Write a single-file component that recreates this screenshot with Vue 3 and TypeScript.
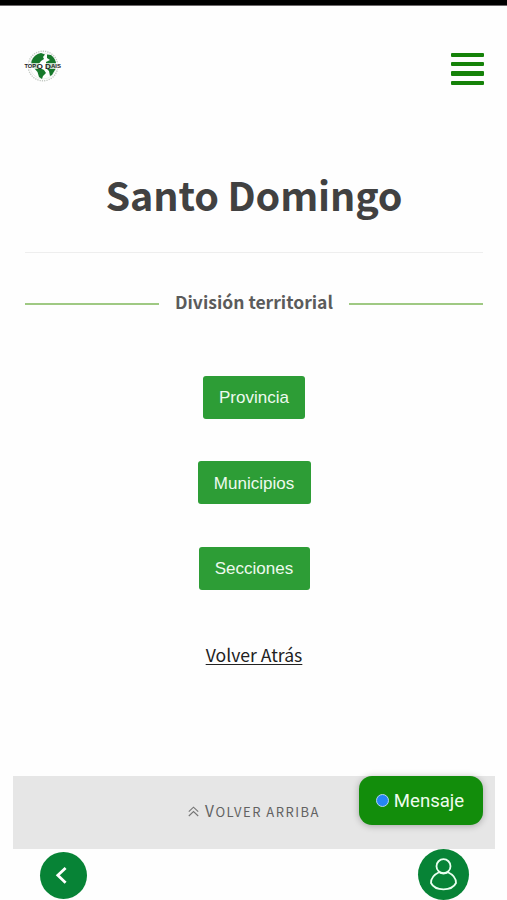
<script setup lang="ts">
import { ref } from 'vue'

interface Division {
  label: string
  width: number
}

const title = ref<string>('Santo Domingo')
const divisions: Division[] = [
  { label: 'Provincia', width: 102 },
  { label: 'Municipios', width: 113 },
  { label: 'Secciones', width: 111 },
]
</script>

<template>
  <div class="page">
    <div class="statusbar"></div>
    <header class="header">
      <svg class="logo" width="38" height="34" viewBox="0 0 38 34" aria-label="Topo Dais">
        <circle cx="19" cy="16" r="14.8" fill="#fff" stroke="#c4cac4" stroke-width="1.4" stroke-dasharray="1.3 1" />
        <circle cx="19" cy="16" r="13" fill="#fdfefd" stroke="#d5ddd5" stroke-width=".5" />
        <path d="M7.5 11Q10 4.5 17 3L21 4.5L19 7L20 9L17 11L14 15L16 18L20 20L22 23L19 26L18 29L15 27L13.5 22L10 18L7 16Z" fill="#16782a" />
        <path d="M23 4.5L27 5Q32 9 32 14L31.5 19L28 25L26 26L25 21L22 18L22 12L26 10L23 8Z" fill="#16782a" />
        <rect x="1" y="13" width="36" height="6" fill="#fff" opacity=".75" />
        <text x="0.5" y="18" class="logo-small" textLength="11.5" lengthAdjust="spacingAndGlyphs">TOP</text>
        <text x="12.4" y="18.8" class="logo-big" textLength="14.6" lengthAdjust="spacingAndGlyphs">O D</text>
        <text x="27" y="18" class="logo-small" textLength="10" lengthAdjust="spacingAndGlyphs">AIS</text>
      </svg>
      <button class="menu" aria-label="Menú">
        <span></span><span></span><span></span><span></span>
      </button>
    </header>

    <main class="content">
      <h1 class="title">{{ title }}</h1>
      <div class="divider"><h2>División territorial</h2></div>
      <nav class="divisions">
        <button v-for="d in divisions" :key="d.label" class="division" :style="{ width: d.width + 'px' }">
          {{ d.label }}
        </button>
      </nav>
      <a class="back" href="#">Volver Atrás</a>
    </main>

    <footer class="footer">
      <a class="top" href="#">
        <svg width="11" height="11" viewBox="0 0 11 11" fill="none" stroke="#757575" stroke-width="1.1">
          <path d="M.8 5.7L5.5 1.2L10.2 5.7M.8 10L5.5 5.5L10.2 10" />
        </svg>
        <span class="top-label">Volver arriba</span>
      </a>
      <button class="message"><i></i><span>Mensaje</span></button>
    </footer>

    <div class="bottom">
      <button class="round prev" aria-label="Anterior">
        <svg width="47" height="47" viewBox="0 0 47 47" fill="none" stroke="#fff" stroke-width="2.8">
          <path d="M25.6 15.9L17.8 23.3L25.6 30.7" />
        </svg>
      </button>
      <button class="round user" aria-label="Perfil">
        <svg width="51" height="51" viewBox="0 0 51 51" fill="none" stroke="#e9fff0" stroke-width="1.8">
          <circle cx="25.5" cy="17.2" r="7" />
          <path d="M21 23.2C16 25.5 13 30 13 34C15 38 20 40.3 25.5 40.3S36 38 38 34C38 30 35 25.5 30 23.2Q25.5 25.8 21 23.2" stroke-linejoin="round" />
        </svg>
      </button>
    </div>
  </div>
</template>

<style>
body {
  background: #fefefe;
}
</style>

<style scoped>
.page {
  box-sizing: border-box;
  width: 507px;
  height: 900px;
  overflow: hidden;
  display: flex;
  flex-direction: column;
  background: #fefefe;
  font-family: "Noto Sans CJK SC", "Open Sans", sans-serif;
}
button {
  border: 0;
  padding: 0;
  margin: 0;
}
.statusbar {
  flex: none;
  height: 5px;
  background: #000;
  border-bottom: 1px solid #6d696b;
}
.header {
  flex: none;
  display: flex;
  justify-content: space-between;
  align-items: flex-start;
  height: 114px;
  padding: 44px 23px 0 24px;
  box-sizing: border-box;
}
.logo text {
  font-family: "Liberation Sans", sans-serif;
  font-weight: 700;
  fill: #222;
}
.logo .logo-small {
  font-size: 4.8px;
}
.logo .logo-big {
  font-size: 7.6px;
}
.menu {
  display: flex;
  flex-direction: column;
  gap: 5px;
  width: 33px;
  margin-top: 3px;
  background: none;
}
.menu span {
  height: 4.2px;
  border-radius: 1px;
  background: #158209;
}
.content {
  flex: none;
  height: 656.4px;
  display: flex;
  flex-direction: column;
  align-items: center;
  padding: 0 24px 0 25px;
  box-sizing: border-box;
}
.title {
  align-self: stretch;
  margin: 0;
  height: 133px;
  padding-top: 44px;
  box-sizing: border-box;
  border-bottom: 1px solid #eee;
  text-align: center;
  font-size: 39.5px;
  font-weight: 700;
  letter-spacing: -0.15px;
  line-height: 60px;
  color: #414141;
}
.divider {
  align-self: stretch;
  display: flex;
  align-items: center;
  gap: 16px;
  height: 30px;
  margin-top: 35px;
}
.divider::before,
.divider::after {
  content: "";
  flex: 1;
  height: 2px;
  margin-top: 1px;
  background: #9fc983;
}
.divider h2 {
  margin: -2px 0 0;
  font-size: 17.5px;
  line-height: 28px;
  font-weight: 700;
  color: #5b5b5b;
}
.divisions {
  display: flex;
  flex-direction: column;
  align-items: center;
  gap: 42.7px;
  margin-top: 57.8px;
}
.division {
  height: 42.8px;
  padding-top: 2px;
  border-radius: 3px;
  background: #2d9d36;
  color: #eefaef;
  font-family: "Liberation Sans", Arial, sans-serif;
  font-size: 17px;
}
.back {
  margin-top: 50.6px;
  font-size: 17.6px;
  line-height: 30px;
  color: #222;
  text-decoration: underline;
  text-decoration-thickness: 1px;
  text-underline-offset: 2px;
}
.footer {
  flex: none;
  position: relative;
  display: flex;
  justify-content: center;
  height: 73px;
  margin: 0 12px 0 13px;
  background: #e6e6e6;
}
.top {
  display: flex;
  align-items: center;
  gap: 6px;
  height: 71px;
  color: #626262;
  text-decoration: none;
}
.top-label {
  display: block;
  font-size: 13px;
  line-height: 24px;
  letter-spacing: 1.5px;
  text-transform: uppercase;
}
.top-label::first-letter {
  font-size: 15.5px;
  line-height: 20px;
}
.message {
  position: absolute;
  right: 12px;
  top: 0;
  display: flex;
  align-items: center;
  justify-content: center;
  gap: 5px;
  width: 124px;
  height: 49px;
  border-radius: 13px;
  background: #128d0b;
  box-shadow: 0 1px 7px rgba(0, 0, 0, 0.28);
  color: #effcee;
  font-family: Roboto, sans-serif;
  font-size: 18.6px;
}
.message i {
  box-sizing: border-box;
  width: 13px;
  height: 13px;
  margin-left: -2px;
  border: 1px solid #b5d6ec;
  border-radius: 50%;
  background: #2586f5;
}
.bottom {
  display: flex;
  justify-content: space-between;
  align-items: flex-start;
  padding: 0 38px 0 40.4px;
}
.round {
  border-radius: 50%;
  background: #078336;
}
.round svg {
  display: block;
}
.prev {
  width: 47px;
  height: 47px;
  margin-top: 2.2px;
}
.user {
  width: 51px;
  height: 51px;
}
</style>
